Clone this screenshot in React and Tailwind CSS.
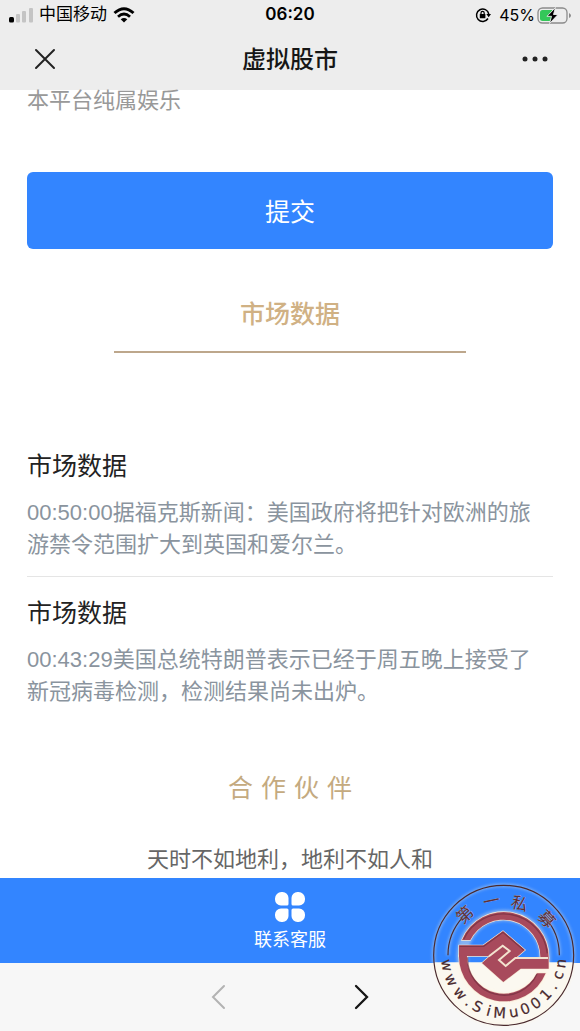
const news = [
  { title: "市场数据", text: "00:50:00据福克斯新闻：美国政府将把针对欧洲的旅游禁令范围扩大到英国和爱尔兰。" },
  { title: "市场数据", text: "00:43:29美国总统特朗普表示已经于周五晚上接受了新冠病毒检测，检测结果尚未出炉。" },
];

const address = [
  ["w", 80], ["w", 65], ["w", 49], [".", 37], ["S", 27], ["i", 15], ["M", 4],
  ["u", -10], ["0", -22], ["0", -34], ["1", -47], [".", -58], ["c", -70], ["n", -82],
];

function StatusBar() {
  return (
    <div className="grid h-[30px] grid-cols-[1fr_auto_1fr] items-center px-2 text-black">
      <div className="flex items-center gap-1.5">
        <svg className="h-[15px] w-[25px]" viewBox="0 0 25 15">
          <rect x="1" y="9" width="5" height="5.500" rx="1.500" fill="#000" />
          <rect x="8" y="6" width="4" height="8.500" rx="1" fill="#c4c4c4" />
          <rect x="14" y="3" width="4" height="11.500" rx="1" fill="#c4c4c4" />
          <rect x="21" y="0" width="4" height="14.500" rx="1" fill="#c4c4c4" />
        </svg>
        <span className="text-[17px]">中国移动</span>
        <svg className="h-4 w-[22px]" viewBox="0 0 22 16" fill="none" stroke="#000">
          <path d="M1.500 6 Q11 -2.600 20.500 6" strokeWidth="3" />
          <path d="M5 9.700 Q11 4.300 17 9.700" strokeWidth="2.800" />
          <path d="M11 15.500 L7.700 12.300 Q11 9.600 14.300 12.300Z" fill="#000" stroke="none" />
        </svg>
      </div>
      <span className="font-[Inter] text-[17px] font-semibold">06:20</span>
      <div className="flex items-center justify-end">
        <svg className="mr-2 h-4 w-4" viewBox="0 0 16 16" fill="none" stroke="#000" strokeWidth="1.500">
          <path d="M13 11.500 A6.200 6.200 0 1 1 13.800 7" />
          <path d="M11.300 7 H16 L13.700 10.300Z" fill="#000" stroke="none" />
          <rect x="4.800" y="7" width="5.600" height="4.300" rx="0.600" fill="#000" stroke="none" />
          <path d="M6 7.500 V6 a1.600 1.600 0 0 1 3.200 0 V7.500" strokeWidth="1.200" />
        </svg>
        <span className="mr-0.5 font-[Inter] text-base">45%</span>
        <svg className="h-[17px] w-[35px]" viewBox="0 0 35 17">
          <rect x="1" y="1" width="29" height="15" rx="4.500" fill="none" stroke="#8b8b8b" strokeWidth="1.300" />
          <path d="M5.500 3 H15 V14 H5.500 Q3 14 3 11.500 V5.500 Q3 3 5.500 3Z" fill="#34c759" />
          <path d="M18.500 0.500 L10 9.300 H14.500 L12.500 16.500 L21 7.500 H16.500Z" fill="#000" stroke="#eee" strokeWidth="0.900" />
          <path d="M32 6 Q34 7 34 8.500 T32 11Z" fill="#8b8b8b" />
        </svg>
      </div>
    </div>
  );
}

function Emblem() {
  return (
    <>
      <path d="M126 210 A135 135 0 0 1 386 264 H361 A111 111 0 0 0 151 210Z" />
      <path d="M117 226 H190 L249 183 L315 240 L258 289 L236 270 L268 242 L249 226 L209 258 H117Z" />
      <path d="M386 264 H287 L258 289 L236 270 L268 242 L247 226 L186 279 L250 336 L302 296 H386Z" />
      <path d="M117 256 A135 135 0 0 0 377 310 H351 A111 111 0 0 1 141 256Z" />
    </>
  );
}

function Seal() {
  return (
    <svg className="pointer-events-none absolute right-0 bottom-0 h-[161px] w-40" viewBox="0 0 480 483" role="img" aria-label="第一私募">
      <defs>
        <filter id="glow" x="-20%" y="-20%" width="140%" height="140%">
          <feGaussianBlur stdDeviation="5" />
        </filter>
        <clipPath id="lower"><rect y="277" width="480" height="206" /></clipPath>
      </defs>
      <circle cx="251" cy="256" r="208" fill="#fbf8f0" clipPath="url(#lower)" />
      <g fill="none" stroke="#fff5df" filter="url(#glow)" opacity="0.4">
        <circle cx="251" cy="256" r="210" strokeWidth="9" />
        <circle cx="251" cy="260" r="124" strokeWidth="34" />
        <path d="M84 256 A168 168 0 0 1 128 142 M418 256 A168 168 0 0 0 375 142" strokeWidth="9" />
      </g>
      <circle cx="251" cy="256" r="210" fill="none" stroke="#49292d" strokeWidth="3.500" />
      <path d="M84 256 A168 168 0 0 1 128 142 M418 256 A168 168 0 0 0 375 142" fill="none" stroke="#49292d" strokeWidth="3.500" />
      <g fill="#f6e6d3" stroke="#f6e6d3" strokeWidth="4"><Emblem /></g>
      <g fill="#a84a5c"><Emblem /></g>
      <g fill="none" stroke="#6b2a3a" strokeWidth="4" opacity="0.6">
        <path d="M131 208 A132 132 0 0 1 382 250" />
        <path d="M143 262 A109 109 0 0 0 351 312" />
        <path d="M119 229 H191 L249 187 L311 240" />
      </g>
      <path d="M207 259 L248 227 L269 243 L237 270 L257 288 L286 264 H384" fill="none" stroke="#f3e3cf" strokeWidth="6" />
      <g fontFamily="'Noto Sans CJK SC', sans-serif" fontSize="50" fill="#5e3036" stroke="#f4d8c8" strokeWidth="1" paintOrder="stroke" textAnchor="middle">
        <text transform="translate(134 134) rotate(-43)" y="18">第</text>
        <text transform="translate(214 93) rotate(-12)" y="18">一</text>
        <text transform="translate(299 101) rotate(15)" y="18">私</text>
        <text transform="translate(380 147) rotate(47)" y="18">募</text>
      </g>
      <g fontFamily="'DejaVu Sans', sans-serif" fontSize="44" fill="#49292d" stroke="#49292d" strokeWidth="0.600" textAnchor="middle">
        {address.map(([glyph, angle]) => (
          <text key={angle} transform={`translate(251 256) rotate(${angle})`} y="188">{glyph}</text>
        ))}
      </g>
    </svg>
  );
}

export default function App() {
  return (
    <div className="relative flex min-h-screen flex-col bg-white font-['Liberation_Sans','Noto_Sans_CJK_SC',sans-serif]">
      <header className="bg-[#ededed]">
        <StatusBar />
        <div className="grid h-[60px] grid-cols-[1fr_auto_1fr] items-center px-8">
          <button aria-label="关闭" className="justify-self-start">
            <svg className="h-[26px] w-[26px]" viewBox="0 0 26 26" fill="none" stroke="#222" strokeWidth="2" strokeLinecap="round">
              <path d="M4 3 L22 21 M22 3 L4 21" />
            </svg>
          </button>
          <h1 className="text-2xl font-medium text-[#161616]">虚拟股市</h1>
          <button aria-label="更多" className="justify-self-end">
            <svg className="h-[26px] w-[26px]" viewBox="0 0 26 26" fill="#222">
              <circle cx="3" cy="12" r="2.500" />
              <circle cx="13" cy="12" r="2.500" />
              <circle cx="23" cy="12" r="2.500" />
            </svg>
          </button>
        </div>
      </header>

      <main className="flex-1 px-[27px] pb-0.5">
        <p className="text-[22px] leading-[22px] text-[#999]">本平台纯属娱乐</p>
        <button className="mt-[60px] h-[77px] w-full rounded-md bg-[#3385ff] pt-1 text-[25px] text-white">提交</button>
        <h2 className="mt-[45px] text-center text-[25px] leading-10 font-medium text-[#d0b184]">市场数据</h2>
        <div className="mx-auto mt-[17px] h-0.5 w-[67%] bg-[#bda78c]" />
        <section className="mt-[77px] divide-y divide-[#e5e5e5]">
          {news.map((item) => (
            <article key={item.text} className="pt-4 pb-[15px]">
              <h3 className="text-[25px] leading-10 text-[#222]">{item.title}</h3>
              <p className="mt-[11px] pr-2 text-[22px] leading-8 text-[#8a949e]">{item.text}</p>
            </article>
          ))}
        </section>
        <h2 className="mt-[46px] text-center font-['DejaVu_Sans','Noto_Sans_CJK_SC',sans-serif] text-[25px] leading-10 text-[#c4aa80]">合 作 伙 伴</h2>
        <p className="mt-[35px] text-center text-[22px] leading-8 text-[#666]">天时不如地利，地利不如人和</p>
      </main>

      <button className="flex h-[85px] w-full flex-col items-center bg-[#3385ff] pt-3.5 text-white">
        <svg className="h-[30px] w-[30px]" viewBox="0 0 30 30" fill="#fff">
          {[0, 90, 180, 270].map((turn) => (
            <path key={turn} transform={`rotate(${turn} 15 15)`} d="M6.500 0 H7.500 A6 6 0 0 1 13.500 6 V12 Q13.500 13.500 12 13.500 H6 A6 6 0 0 1 0 7.500 V6.500 A6.500 6.500 0 0 1 6.500 0Z" />
          ))}
        </svg>
        <span className="mt-1 text-lg">联系客服</span>
      </button>
      <nav className="flex h-[68px] items-center justify-center gap-[116px] bg-[#f7f7f7]">
        <button aria-label="后退">
          <svg className="h-[26px] w-[26px]" viewBox="0 0 26 26" fill="none" stroke="#b3b3b3" strokeWidth="2" strokeLinecap="round">
            <path d="M18 2 L7 13 L18 24" />
          </svg>
        </button>
        <button aria-label="前进">
          <svg className="h-[26px] w-[26px]" viewBox="0 0 26 26" fill="none" stroke="#161616" strokeWidth="2.300" strokeLinecap="round">
            <path d="M8 2 L19 13 L8 24" />
          </svg>
        </button>
      </nav>
      <Seal />
    </div>
  );
}
